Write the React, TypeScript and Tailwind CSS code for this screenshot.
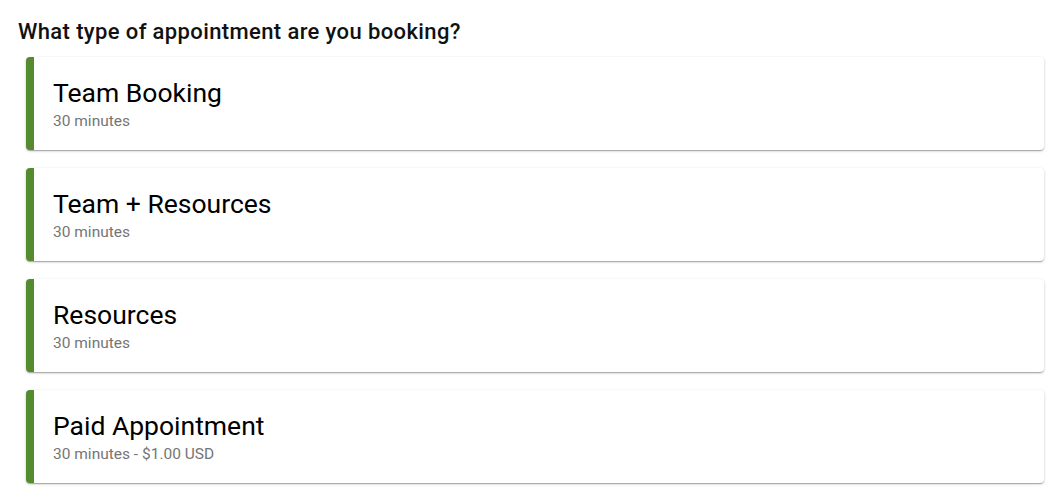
const appointmentTypes = [
  { name: 'Team Booking', detail: '30 minutes' },
  { name: 'Team + Resources', detail: '30 minutes' },
  { name: 'Resources', detail: '30 minutes' },
  { name: 'Paid Appointment', detail: '30 minutes - $1.00 USD' },
];

export default function App() {
  return (
    <div className="min-h-screen bg-white px-[18px] pt-[18px] font-['Roboto',sans-serif]">
      <h2 className="text-[22px] leading-[28px] font-medium tracking-[0.38px] text-[#111]">
        What type of appointment are you booking?
      </h2>
      <div className="mt-[11px] ml-2 flex flex-col gap-[18px] mr-px">
        {appointmentTypes.map((t) => (
          <button
            key={t.name}
            className="text-left bg-white rounded-[4px] border-l-8 border-[#558b2f] pl-[19px] pt-5 pb-[19px] shadow-[0_1px_3px_0_rgba(0,0,0,0.2),0_1px_1px_0_rgba(0,0,0,0.14),0_2px_1px_-1px_rgba(0,0,0,0.12)]"
          >
            <div className="text-[26.5px] leading-[32px] text-black">{t.name}</div>
            <div className="mt-[2px] text-[15.5px] leading-[20px] text-[#757575]">{t.detail}</div>
          </button>
        ))}
      </div>
    </div>
  );
}
